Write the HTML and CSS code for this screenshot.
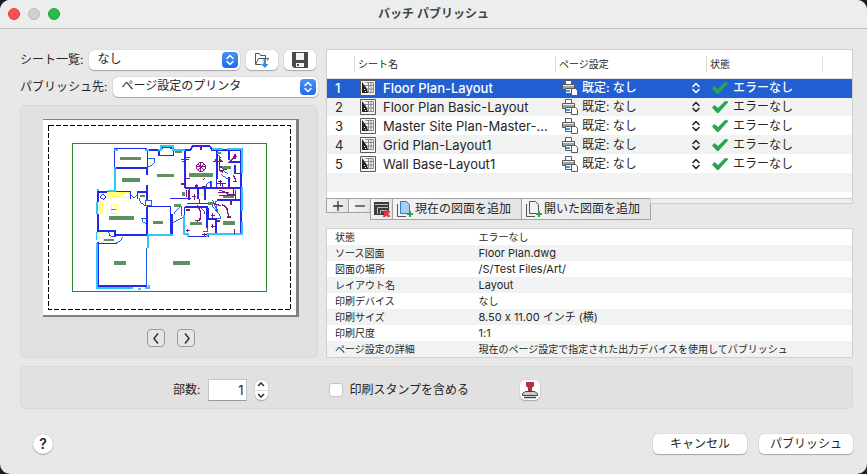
FILE: index.html
```
<!DOCTYPE html>
<html lang="ja">
<head>
  <meta charset="UTF-8" />
  <title>バッチ パブリッシュ</title>
  <link rel="stylesheet" href="styles.css">
</head>
<body>

  <!-- shared icons -->
  <svg class="defs" width="0" height="0">
    <symbol id="i-updown" viewBox="0 0 16 16">
      <path d="M5 6.5 8 3.5l3 3M5 9.5l3 3 3-3" fill="none" stroke="currentColor" stroke-width="1.6" stroke-linecap="round" stroke-linejoin="round"/>
    </symbol>
    <symbol id="i-sheet" viewBox="0 0 16 16">
      <path d="M.5.5h15v15H.5z" fill="#f4f4f4" stroke="#5a5a5a"/>
      <path d="M5.5 2.5h8v10h-6M8.5 2.500v10M11 2.500v10M5 5.5h8.5M7 9h6.5" fill="none" stroke="#8a8a8a"/>
      <path d="M2 2l3 4 2 3 1 4H2z" fill="#222"/>
      <path d="M4 9h1v1H4zM5 11h1v1H5z" fill="#fff"/>
    </symbol>
    <symbol id="i-printer" viewBox="0 0 16 16">
      <path d="M3.5 4.5v-4h6v4" fill="#fff" stroke="#5a5a5a"/>
      <path d="M.5 4.5h12v5H.5z" fill="#a2a2a2" stroke="#5a5a5a"/>
      <path d="M1 5h11v1H1z" fill="#f0f0f0"/>
      <path d="M3.5 8.5h6v5h-6z" fill="#fff" stroke="#5a5a5a"/>
      <path d="M4 10h4v2H4z" fill="#3c9fe0"/>
      <path d="M9.5 8.5h4l2 2v5h-6z" fill="#fff" stroke="#5a5a5a"/>
    </symbol>
    <symbol id="i-check" viewBox="0 0 16 14">
      <path d="M0 7.500 2.500 5l3.500 3L13 1l3 .5v1L6.500 13H5z" fill="#27a550"/>
    </symbol>
  </svg>

  <div class="window">
    <header class="titlebar">
      <div class="lights">
        <span class="light close"></span>
        <span class="light minimize"></span>
        <span class="light expand"></span>
      </div>
      <h1>バッチ パブリッシュ</h1>
    </header>

    <main>
      <div class="columns">
        <section class="left">
          <div class="field">
            <label for="sheetList">シート一覧:</label>
            <span class="popup">
              <select id="sheetList"><option>なし</option></select>
              <svg class="arrows"><use href="#i-updown"/></svg>
            </span>
            <button class="btn icon-btn" aria-label="読み込み">
              <svg width="16" height="16" viewBox="0 0 16 16">
                <path d="M1.5 12.5v-11h4l1 2h5v3M1.5 12.500l3-6h10l-1 2M2 12.5h5" fill="none" stroke="#555"/>
                <path d="M9.500 7h2.500v5h2.500l-3.500 4-4-4h2.500z" fill="#2b8ee0"/>
              </svg>
            </button>
            <button class="btn icon-btn" aria-label="保存">
              <svg width="16" height="16" viewBox="0 0 16 16">
                <path d="M0 0h16v16H2l-2-2z" fill="#4b4b4b"/>
                <path d="M4 1h8v7H4zM4 11h8v4H4z" fill="#f4f4f4"/>
                <path d="M5 12h2v2H5z" fill="#4b4b4b"/>
              </svg>
            </button>
          </div>
          <div class="field">
            <label for="publishTo">パブリッシュ先:</label>
            <span class="popup">
              <select id="publishTo"><option>ページ設定のプリンタ</option></select>
              <svg class="arrows"><use href="#i-updown"/></svg>
            </span>
          </div>

          <div class="preview">
            <svg class="paper" width="256" height="198" viewBox="0 0 256 198" fill="none" shape-rendering="crispEdges">
              <path d="M0 0h256v198H0z" fill="#808080"/>
              <path d="M0 1h253v195H0z" fill="#fff"/>
              <path d="M5.5 6.5h242v184H5.500z" stroke="#000" stroke-dasharray="5 2"/>
              <path d="M29.5 24.5h194v148h-194z" stroke="#2c8a2c"/>
              <g transform="translate(47 16) scale(.333333)">
                <!-- thin walls and doors -->
                <g stroke="#1f62e6" stroke-width="3">
                  <path d="M172 72h22v8l-9 12-13 3M170 338v115M122 178l11 12 9-12M147 190l6 13 14 10M166 196h18v16h-18zM172 250h-17l5 12 12 4M54 288l6 14 12 4M98 305l-7 12-12 6M248 264l32-18M250 238l20-22h6v26M350 158v-12l15-8v20M333 218l12 12v8M362 205l22 30-8-36 22-4M366 250h28l-14-24M392 118l22 14M400 105l15 14M338 290h14v-14M368 196l12 28"/>
                </g>
                <!-- main walls -->
                <g stroke="#2229ee" stroke-width="5">
                  <path d="M79 99h92v20M171 150v45M24 168v34M24 171h98v22M143 192v-20h28M172 45h34M208 48v14h43V48M217 43v-6h26v6M251 46h34v113M171 215h71v82M240 191h64M24 238v50h52v18M24 318v132M24 326h56M76 300h96v-85M24 454h146M285 45h16l6-11h53l6 11h92M381 45v86M418 45v30M418 125v34M418 82h36M436 90v26h18M380 132v25M285 159h170M298 159v37M324 159v34M346 159v36M362 138v24M380 195h72M437 164v28M454 45v250M285 216h66v62M246 238v60M354 252h25v44M354 218v36M284 216v78M294 305h60v-9h98"/>
                  <path d="M74 40v58M74 41h98v54M30 186l8-8 10 6-8 10zM381 80h16M380 145h18v10M384 60l12 10M388 166l28 8" stroke-width="3"/>
                </g>
                <!-- windows -->
                <g stroke="#2cc6f8" stroke-width="6">
                  <path d="M72 45h12M76 96v72H54M166 45h12M204 45h8V34h38v11h36M21 166h6M21 200v38M21 290v24M21 325v134h108M145 461h8M166 458h10v-8M173 340v-39h76M282 240v57h12v10M366 43h34M412 43h44v72M456 157v70M456 262v35H351v10"/>
                </g>
                <!-- fixtures -->
                <g stroke="#ffff6e" stroke-width="3">
                  <path d="M54 172h46v12H54zM100 172h18v15h-18zM54 178h46M28 200h11v34H28zM33 200v36M65 208h14v28H65zM24 293h16v28H24zM24 307h16M396 50v30M396 50h14M426 84v34M430 84v34M328 164h14v14h-14zM296 162v24M380 163h54M380 177h50"/>
                </g>
                <!-- electrical -->
                <g stroke="#861182" stroke-width="4">
                  <circle cx="333" cy="96" r="14" stroke-width="3"/>
                  <path d="M323 87l20 18M343 87l-20 18M333 82v28M319 96h28" stroke-width="3"/>
                  <path d="M333 34v11M288 68h11M272 74h26M276 79h12M368 80h10v-9M388 62v42l10 8M388 72l10 8M388 96h8M435 58v14M428 65h12M432 68l-16 16M430 120l8 16M430 140h10M391 108l26-8M288 130h11M274 147h12M319 147v12M314 153h10M336 154h12M384 160h46v22h-44M384 172h24l8 8h18M290 164v22M297 164v24M313 176v20M307 184h12M290 206h80l22 6M329 192v16M322 210l10 20-2 24-8 4v6M316 256h12M396 208l14 10 6 26M410 246h12M423 196v14M368 234v14M362 241h12M377 258h14M362 274h12M367 266v14M293 283v8M287 287h12M336 299h14M343 294v10M434 283v14M288 225h12M340 134l4-4M383 140h14M392 134v18M400 146h8"/>
                </g>
                <!-- room names -->
                <g fill="#5f9160">
                  <path d="M90 66h63v9H90zM96 129h54v11H96v-1zM201 117h51v9h-51zM297 114h72v11h-72zM57 243h75v11H57zM189 258h30v9h-30zM300 261h36v9h-36zM399 258h36v11h-36zM72 378h36v11H72zM249 378h51v11h-51zM42 312h30v6H42zM150 180h15v5h-15zM63 222h15v3H63zM252 207h21v9h-21zM255 48h21v6h-21zM396 93h27v9h-27zM399 183h33v6h-33zM354 201h15v9h-15zM276 171h8v12h-8zM381 51h12v6h-12z"/>
                </g>
              </g>
            </svg>
            <div class="pager">
              <button aria-label="前へ"><svg width="16" height="16" viewBox="0 0 16 16"><path d="M10 3.5 6 8.500l4 5"/></svg></button>
              <button aria-label="次へ"><svg width="16" height="16" viewBox="0 0 16 16"><path d="m7 3.5 4 5-4 5"/></svg></button>
            </div>
          </div>
        </section>

        <section class="right">
          <div class="sheet-box">
            <table class="sheets">
              <colgroup><col class="c-num"><col class="c-name"><col class="c-page"><col class="c-state"><col></colgroup>
              <thead>
                <tr><th></th><th>シート名</th><th>ページ設定</th><th>状態</th><th></th></tr>
              </thead>
              <tbody>
                <tr class="selected">
                  <td>1</td>
                  <td><div class="cell name"><svg class="ic"><use href="#i-sheet"/></svg>Floor Plan-Layout</div></td>
                  <td><div class="cell page"><svg class="ic"><use href="#i-printer"/></svg><select aria-label="ページ設定 1"><option>既定: なし</option></select><svg class="ic"><use href="#i-updown"/></svg></div></td>
                  <td colspan="2"><div class="cell state"><svg class="ic"><use href="#i-check"/></svg>エラーなし</div></td>
                </tr>
                <tr>
                  <td>2</td>
                  <td><div class="cell name"><svg class="ic"><use href="#i-sheet"/></svg>Floor Plan Basic-Layout</div></td>
                  <td><div class="cell page"><svg class="ic"><use href="#i-printer"/></svg><select aria-label="ページ設定 2"><option>既定: なし</option></select><svg class="ic"><use href="#i-updown"/></svg></div></td>
                  <td colspan="2"><div class="cell state"><svg class="ic"><use href="#i-check"/></svg>エラーなし</div></td>
                </tr>
                <tr>
                  <td>3</td>
                  <td><div class="cell name"><svg class="ic"><use href="#i-sheet"/></svg>Master Site Plan-Master-...</div></td>
                  <td><div class="cell page"><svg class="ic"><use href="#i-printer"/></svg><select aria-label="ページ設定 3"><option>既定: なし</option></select><svg class="ic"><use href="#i-updown"/></svg></div></td>
                  <td colspan="2"><div class="cell state"><svg class="ic"><use href="#i-check"/></svg>エラーなし</div></td>
                </tr>
                <tr>
                  <td>4</td>
                  <td><div class="cell name"><svg class="ic"><use href="#i-sheet"/></svg>Grid Plan-Layout1</div></td>
                  <td><div class="cell page"><svg class="ic"><use href="#i-printer"/></svg><select aria-label="ページ設定 4"><option>既定: なし</option></select><svg class="ic"><use href="#i-updown"/></svg></div></td>
                  <td colspan="2"><div class="cell state"><svg class="ic"><use href="#i-check"/></svg>エラーなし</div></td>
                </tr>
                <tr>
                  <td>5</td>
                  <td><div class="cell name"><svg class="ic"><use href="#i-sheet"/></svg>Wall Base-Layout1</div></td>
                  <td><div class="cell page"><svg class="ic"><use href="#i-printer"/></svg><select aria-label="ページ設定 5"><option>既定: なし</option></select><svg class="ic"><use href="#i-updown"/></svg></div></td>
                  <td colspan="2"><div class="cell state"><svg class="ic"><use href="#i-check"/></svg>エラーなし</div></td>
                </tr>
              </tbody>
            </table>
          </div>

          <div class="toolbar">
            <button class="tool small" aria-label="追加"><svg width="12" height="12" viewBox="0 0 12 12"><path d="M6 1v10M1 6h10" stroke="#333" stroke-width="1.3"/></svg></button>
            <button class="tool small" aria-label="削除"><svg width="12" height="12" viewBox="0 0 12 12"><path d="M1 6h10" stroke="#333" stroke-width="1.3"/></svg></button>
            <button class="tool" aria-label="シートを除去">
              <svg width="16" height="16" viewBox="0 0 16 16">
                <path d="M0 1h15v8l-5 5H0z" fill="#3c3c3c"/>
                <path d="M1 3.5h13M3.5 13V6.500H14M6.500 13V9.500H13" stroke="#bbb" fill="none"/>
                <path d="m9.500 10 6 6M15.500 10l-6 6" stroke="#f0303c" stroke-width="2.4"/>
              </svg>
            </button>
            <button class="tool wide">
              <svg width="16" height="16" viewBox="0 0 16 16">
                <path d="M.5 3v12.500H9" fill="none" stroke="#555"/>
                <path d="M3.5.5h6l3 3v9h-9z" fill="#a9cdec" stroke="#2d7fc4"/>
                <path d="M13 10v6M10 13h6" stroke="#27a550" stroke-width="2"/>
              </svg>
              現在の図面を追加
            </button>
            <button class="tool wide">
              <svg width="16" height="16" viewBox="0 0 16 16">
                <path d="M.5 3v12.500H9" fill="none" stroke="#555"/>
                <path d="M3.5.5h6l3 3v9h-9z" fill="#f2f2f2" stroke="#555"/>
                <path d="M13 10v6M10 13h6" stroke="#27a550" stroke-width="2"/>
              </svg>
              開いた図面を追加
            </button>
            <span class="track"></span>
          </div>

          <table class="details">
            <tr><th>状態</th><td>エラーなし</td></tr>
            <tr><th>ソース図面</th><td class="latin">Floor Plan.dwg</td></tr>
            <tr><th>図面の場所</th><td class="latin">/S/Test Files/Art/</td></tr>
            <tr><th>レイアウト名</th><td class="latin">Layout</td></tr>
            <tr><th>印刷デバイス</th><td>なし</td></tr>
            <tr><th>印刷サイズ</th><td class="latin">8.50 x 11.00 インチ (横)</td></tr>
            <tr><th>印刷尺度</th><td class="latin">1:1</td></tr>
            <tr><th>ページ設定の詳細</th><td>現在のページ設定で指定された出力デバイスを使用してパブリッシュ</td></tr>
          </table>
        </section>
      </div>

      <section class="options">
        <label for="copies">部数:</label>
        <input type="text" id="copies" value="1" />
        <div class="stepper">
          <button aria-label="増やす"><svg width="8" height="5" viewBox="0 0 8 5"><path d="M1 4l3-3 3 3"/></svg></button>
          <button aria-label="減らす"><svg width="8" height="5" viewBox="0 0 8 5"><path d="M1 1l3 3 3-3"/></svg></button>
        </div>
        <label class="stamp-check"><input type="checkbox" id="stamp" />印刷スタンプを含める</label>
        <button class="btn stamp-btn" aria-label="スタンプ設定">
          <svg width="16" height="18" viewBox="0 0 16 18">
            <path d="M4 1h8v4l-2 2v4H6V7L4 5z" fill="#b0343c"/>
            <path d="M3.5 10.500h9l3 2v2H.5v-2z" fill="#c9cdcc" stroke="#444"/>
            <path d="M2 16.500h12" stroke="#444" stroke-width="1.5"/>
          </svg>
        </button>
      </section>

      <footer>
        <button class="help" aria-label="ヘルプ">?</button>
        <button class="btn action">キャンセル</button>
        <button class="btn action">パブリッシュ</button>
      </footer>
    </main>
  </div>

</body>
</html>
```
FILE: styles.css
```
* {
  box-sizing: border-box;
}
body {
  margin: 0;
  background: #1b1d28;
  font-family: Inter, "Noto Sans CJK JP", sans-serif;
  font-size: 12px;
  line-height: 16px;
  font-variant-ligatures: no-contextual;
  color: #262626;
}
button, input, select {
  font: inherit;
  color: inherit;
  margin: 0;
}
svg {
  display: block;
  flex: none;
}
.defs {
  position: absolute;
}
.window {
  display: flex;
  flex-direction: column;
  min-height: 100vh;
  background: #e8e8e8;
  border-radius: 10px;
  overflow: hidden;
}

/* title bar */
.titlebar {
  display: grid;
  grid-template-columns: 60px 1fr 60px;
  align-items: center;
  height: 29px;
  background: #eceeed;
  border-bottom: 1px solid #bfbfbf;
}
.titlebar h1 {
  margin: 0;
  font-size: 12px;
  font-weight: bold;
  text-align: center;
  color: #444;
}
.lights {
  display: flex;
  gap: 8px;
  padding-left: 8px;
}
.light {
  width: 12px;
  height: 12px;
  border-radius: 50%;
  border: 1px solid #b9bbba;
  background: #cfd1d0;
}
.light.close { background: #fe5050; border-color: #e23f41; }
.light.expand { background: #2abb4a; border-color: #1fa53c; }

main {
  flex: 1;
  padding: 20px 14px 20px 20px;
}
.columns {
  display: grid;
  grid-template-columns: 298px minmax(0, 1fr);
  gap: 8px;
}
.left, .right {
  display: flex;
  flex-direction: column;
}
.left {
  padding-top: 1px;
}

/* pop-ups and buttons */
.field {
  display: flex;
  align-items: center;
  gap: 6px;
  height: 20px;
  margin-bottom: 7px;
}
.field .btn:last-child {
  margin-right: 2px;
}
.popup {
  position: relative;
  flex: 1;
}
.popup select {
  display: block;
  width: 100%;
  height: 20px;
  padding: 0 24px 2px 8px;
  appearance: none;
  border: none;
  border-radius: 5px;
  background: #fff;
  box-shadow: 0 0 1px #999, 0 1px 1px #aaa;
}
.arrows {
  position: absolute;
  top: 2px;
  right: 2px;
  width: 16px;
  height: 16px;
  border-radius: 4px;
  background: linear-gradient(#4a92f5, #1d6cf0);
  color: #fff;
  pointer-events: none;
}
.btn {
  display: flex;
  align-items: center;
  justify-content: center;
  height: 20px;
  padding: 0;
  border: none;
  border-radius: 5px;
  background: #fff;
  box-shadow: 0 0 1px #999, 0 1px 1px #aaa;
}
.icon-btn {
  width: 32px;
}

/* preview */
.preview {
  flex: 1;
  display: flex;
  flex-direction: column;
  align-items: center;
  margin-top: 1px;
  padding: 13px 16px 9px 20px;
  border: 1px solid #d8d8d8;
  border-radius: 5px;
  background: #e1e1e1;
}
.pager {
  display: flex;
  gap: 12px;
  margin-top: 12px;
}
.pager button {
  width: 18px;
  height: 18px;
  padding: 0;
  border: 1px solid #999;
  border-radius: 4px;
  background: #e6e6e6;
}
.pager path {
  fill: none;
  stroke: #333;
  stroke-width: 1.5;
}

/* sheet list */
.sheet-box {
  height: 149px;
  border: 1px solid #cfcfcf;
  border-bottom: none;
  background: repeating-linear-gradient(#fff 0 19px, #f1f3f2 19px 38px) 0 28px #fff no-repeat;
}
.sheets, .details {
  width: 100%;
  border-collapse: collapse;
  table-layout: fixed;
}
.c-num { width: 28px; }
.c-name { width: 201px; }
.c-page { width: 151px; }
.c-state { width: 116px; }
.sheets th {
  height: 28px;
  padding: 0 0 0 3px;
  border-bottom: 1px solid #e0e0e0;
  font-size: 10px;
  font-weight: normal;
  text-align: left;
  background: linear-gradient(#dcdcdc, #dcdcdc) right 6px / 1px 16px no-repeat #fff;
}
.sheets th:last-child {
  background: #fff;
}
.sheets td {
  height: 19px;
  padding: 0 0 1px;
  white-space: nowrap;
}
.sheets td:first-child {
  padding-left: 8px;
  font-size: 13px;
}
.sheets .selected {
  background: #225fd2;
  color: #fff;
  font-weight: 500;
}
.cell {
  display: flex;
  align-items: center;
  padding-left: 5px;
}
.cell.name {
  gap: 7px;
  font-size: 13px;
}
.cell.page {
  gap: 4px;
  padding: 0 3px 0 6px;
}
.cell.state {
  gap: 5px;
}
.ic {
  width: 16px;
  height: 16px;
}
.cell select {
  flex: 1;
  height: 18px;
  padding: 0;
  appearance: none;
  border: none;
  background: none;
}

/* buttons under the list */
.toolbar {
  display: flex;
  align-items: flex-start;
  height: 22px;
  margin-bottom: 8px;
}
.tool {
  display: flex;
  align-items: center;
  justify-content: center;
  width: 23px;
  height: 22px;
  margin-right: -1px;
  padding: 0;
  border: 1px solid #a2a2a2;
  background: linear-gradient(90deg, #f4f4f4, #e4e4e4);
}
.tool.small {
  height: 15px;
}
.tool.wide {
  justify-content: flex-start;
  gap: 2px;
  width: 130px;
  padding-left: 4px;
}
.track {
  flex: 1;
  height: 6px;
  border: 1px solid #cfcfcf;
  background: #eee;
}

/* details */
.details {
  border: 1px solid #cfcfcf;
  background: #fff;
  font-size: 10px;
}
.details tr:nth-child(even) {
  background: #f1f3f2;
}
.details th, .details td {
  height: 16px;
  padding: 0 0 0 8px;
  font-weight: normal;
  text-align: left;
  white-space: nowrap;
}
.details th {
  width: 144px;
}
.details .latin {
  font-size: 11px;
}

/* print options */
.options {
  display: flex;
  align-items: center;
  height: 43px;
  margin-top: 8px;
  padding: 4px 0 0 152px;
  border: 1px solid #d8d8d8;
  border-radius: 5px;
  background: #e1e1e1;
}
#copies {
  width: 39px;
  height: 22px;
  margin: 0 8px;
  padding: 0 3px;
  border: 1px solid #c6c6c6;
  border-bottom-color: #999;
  background: #fff;
  font-size: 13px;
  text-align: right;
}
.stepper {
  display: flex;
  flex-direction: column;
  width: 13px;
  margin-right: 61px;
  border-radius: 6px;
  background: #fff;
  box-shadow: 0 0 1px #999, 0 1px 1px #aaa;
}
.stepper button {
  height: 10px;
  padding: 0 2px;
  border: none;
  background: none;
}
.stepper button + button {
  border-top: 1px solid #ddd;
}
.stepper path {
  fill: none;
  stroke: #333;
  stroke-width: 1.6;
}
.stamp-check {
  display: flex;
  align-items: center;
  gap: 6px;
  margin-right: 51px;
}
.stamp-check input {
  width: 14px;
  height: 14px;
  appearance: none;
  border: 1px solid #c4c4c4;
  border-radius: 3px;
  background: #fff;
}
.stamp-btn {
  width: 20px;
}

/* footer */
footer {
  display: flex;
  gap: 12px;
  margin-top: 25px;
}
.help {
  width: 20px;
  height: 20px;
  margin: 0 auto 0 13px;
  padding: 0;
  border: none;
  border-radius: 50%;
  background: #fff;
  box-shadow: 0 0 1px #999, 0 1px 1px #aaa;
  font-size: 14px;
  font-weight: 600;
}
.action {
  width: 94px;
}
```
